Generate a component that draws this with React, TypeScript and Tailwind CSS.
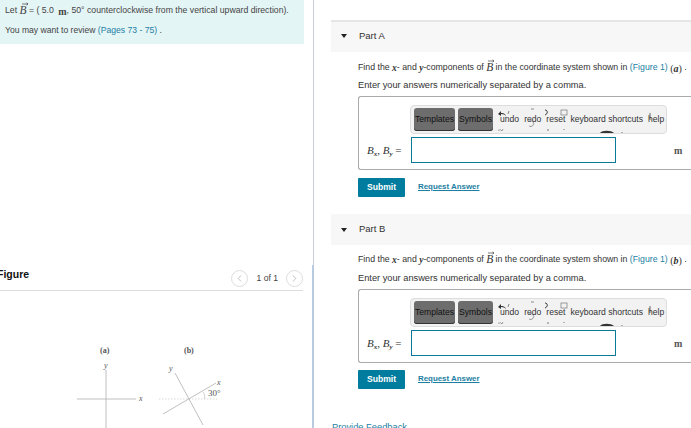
import { ChevronLeft, ChevronRight } from 'lucide-react'

const serif = 'font-["Liberation_Serif",serif]'

function Bvec() {
  return (
    <span className={`relative inline-block ${serif} text-[11.5px] italic leading-none`}>
      B
      <svg className="absolute -top-[3px] left-[2px]" width="7" height="4" viewBox="0 0 7 4" fill="none" stroke="#444" strokeWidth="0.7">
        <path d="M0 2h6M4.500 0.800L6 2 4.500 3.200" />
      </svg>
    </span>
  )
}

function ToolbarBits() {
  // fragments of toolbar icons that are broken up in the reference
  return (
    <svg className="pointer-events-none absolute left-0 top-0" width="256" height="30" viewBox="0 0 256 30" fill="none">
      <path d="M87 8l3-3v2c3 0 5 1 5 4 0-2-2-3-5-3v2z" fill="#333" />
      <path d="M87 24c1 1 2-1 3 0l1 1 1-2" stroke="#777" strokeWidth="0.7" />
      <path d="M97 8l1-3" stroke="#555" strokeWidth="0.7" />
      <path d="M120 3h3" stroke="#666" strokeWidth="0.7" />
      <path d="M134 4c3 0 3 4 0 5" stroke="#333" strokeWidth="1" />
      <rect x="150" y="4" width="6" height="5" stroke="#777" strokeWidth="0.7" />
      <path d="M137 23v2M153 23v1M211 26v1" stroke="#555" strokeWidth="0.8" />
      <path d="M118 15a3 3 0 1 1 0 5" stroke="#777" strokeWidth="0.7" />
      <path d="M189 27c2-3 11-3 14 0z" fill="#333" />
      <path d="M239 7v7" stroke="#444" strokeWidth="0.8" />
    </svg>
  )
}

function Part({ name, fig, first }: { name: string; fig: string; first?: boolean }) {
  return (
    <section className={first ? 'mt-[20px]' : 'mt-[17px]'}>
      <div className={`ml-[16px] flex items-center bg-[#f7f7f7] ${first ? 'h-[32px] border-t-2 border-[#e5e5e5] pb-[2px]' : 'h-[31px]'}`}>
        <span className="ml-[10px] h-0 w-0 border-x-[3.5px] border-t-[4px] border-x-transparent border-t-[#222]" />
        <span className="ml-[12px] text-[9.5px] text-[#333]">{name}</span>
      </div>
      <div className="pl-[43px]">
        <p className={`${first ? 'mt-[8px]' : 'mt-[7px]'} flex h-[16px] items-center whitespace-nowrap text-[8.75px] text-[#333]`}>
          Find the&nbsp;<i className={`${serif} text-[9.5px] font-bold`}>x</i>- and&nbsp;<i className={`${serif} text-[9.5px] font-bold`}>y</i>-components of&nbsp;<Bvec />&nbsp;in the coordinate system shown in&nbsp;
          <span className="text-[#1d7fa3]">(Figure 1)</span>&nbsp;<span className={`${serif} text-[10px]`}>(<b><i>{fig}</i></b>)</span>&nbsp;.
        </p>
        <p className={`${first ? 'mt-[1px]' : 'mt-[2px]'} h-[16px] whitespace-nowrap text-[9.25px] leading-[16px] text-[#333]`}>
          Enter your answers numerically separated by a comma.
        </p>
        <div className="mt-[3px] h-[74px] w-[333px] rounded-l-[3px] border border-r-0 border-[#aaa] pt-[8px]">
          <div className="relative ml-[51px] flex h-[29px] w-[257px] items-center rounded-[4px] border border-[#ddd] bg-[#f2f2f2] pb-[1px] pl-[3px] text-[8.6px] text-[#333]">
            <span className="flex h-[23px] w-[41px] items-center justify-center overflow-hidden rounded-[3px] bg-[#6d6d6d] text-[#111] shadow-[inset_0_-1px_0_#333]">Templates</span>
            <span className="ml-[3px] flex h-[23px] w-[35px] items-center justify-center overflow-hidden rounded-[3px] bg-[#6d6d6d] text-[#111] shadow-[inset_0_-1px_0_#333]">Symbols</span>
            <span className="ml-[7px]">undo</span>
            <span className="ml-[5px]">redo</span>
            <span className="ml-[5px]">reset</span>
            <span className="ml-[5px]">keyboard shortcuts</span>
            <span className="ml-[5px]">help</span>
            <ToolbarBits />
          </div>
          <div className="mt-[3px] flex items-center">
            <span className={`w-[52px] pl-[8px] ${serif} whitespace-nowrap text-[11px] text-[#333]`}>
              <i>B<sub className="text-[7px] font-bold">x</sub></i>, <i>B<sub className="text-[7px] font-bold">y</sub></i> <span className="not-italic">=</span>
            </span>
            <div className="h-[26px] w-[205px] border-[1.5px] border-[#0b7a99] bg-white" />
            <span className={`ml-[58px] ${serif} text-[10px] font-bold text-[#555]`}>m</span>
          </div>
        </div>
        <div className={`${first ? 'mt-[8px]' : 'mt-[7px]'} flex items-center`}>
          <button type="button" className="h-[19px] w-[47px] rounded-[1px] bg-[#007c9e] text-[8.6px] font-bold text-white">Submit</button>
          <a className="mb-[2px] ml-[13px] text-[7.9px] font-bold text-[#1d7fa3] underline">Request Answer</a>
        </div>
      </div>
    </section>
  )
}

export default function App() {
  return (
    <div className='flex h-[428px] w-[691px] overflow-hidden bg-white font-["Liberation_Sans",sans-serif]'>
      <aside className="w-[313px] shrink-0">
        <div className="h-[44px] w-[304px] bg-[#e4f5f6] pl-[5px] pt-[3px] text-[8.6px] text-[#444]">
          <p className="flex h-[16px] items-center whitespace-nowrap text-[8.7px]">
            Let&nbsp;<Bvec />&nbsp;= ( 5.0&nbsp;<span className={`${serif} ml-[2px] text-[10px] font-bold`}>m</span>, 50° counterclockwise from the vertical upward direction).
          </p>
          <p className="mt-[3px] h-[16px] leading-[16px]">
            You may want to review <span className="text-[#1d7fa3]">(Pages 73 - 75)</span> .
          </p>
        </div>
        <div className="mt-[218px] flex h-[29px] w-[303px] items-center border-b border-[#ddd] pb-[3px]">
          <h2 className="-ml-[3px] mt-[1px] text-[10.5px] font-bold text-[#111]">Figure</h2>
          <div className="ml-auto mt-[7px] flex items-center text-[8.6px] text-[#444]">
            <span className="flex h-[17px] w-[17px] items-center justify-center rounded-full border border-[#ddd] text-[#bbb]"><ChevronLeft size={11} /></span>
            <span className="mx-[8px]">1 of 1</span>
            <span className="flex h-[17px] w-[17px] items-center justify-center rounded-full border border-[#ddd] text-[#bbb]"><ChevronRight size={11} /></span>
          </div>
        </div>
        <svg className="ml-[60px] mt-[50px] block" width="200" height="87" viewBox="0 0 200 87" fill="none" stroke="#b0b0b0" strokeWidth="0.8">
          <g fill="#555" stroke="none" fontFamily='"Liberation Serif", serif' fontSize="8">
            <text x="40" y="12" fontWeight="bold">(a)</text>
            <text x="124" y="12" fontWeight="bold">(b)</text>
            <text x="44" y="27" fontStyle="italic">y</text>
            <text x="79" y="60" fontStyle="italic">x</text>
            <text x="109" y="30" fontStyle="italic">y</text>
            <text x="157" y="44" fontStyle="italic">x</text>
            <text x="148" y="55" fontSize="9">30°</text>
          </g>
          <path d="M46 29v58M17 58h59" />
          <path d="M115 32l28 52M103 73l53-31" />
          <path d="M99 58h60" strokeDasharray="1.5 1.5" strokeWidth="0.5" />
          <path d="M143 51c1.500 2 2 4 1.500 7" strokeWidth="0.6" />
        </svg>
      </aside>
      <div className="flex w-[2px] shrink-0 flex-col">
        <div className="h-[265px] w-[1px] bg-[#c4cdd8]" />
        <div className="h-[163px] w-[2px] -translate-x-[1px] bg-[#b8cbe0]" />
      </div>
      <main className="min-w-0 flex-1 overflow-hidden">
        <Part name="Part A" fig="a" first />
        <Part name="Part B" fig="b" />
        <p className="ml-[17px] mt-[32px] whitespace-nowrap text-[9.3px] leading-[12px] text-[#1d7fa3]">Provide Feedback</p>
      </main>
    </div>
  )
}
